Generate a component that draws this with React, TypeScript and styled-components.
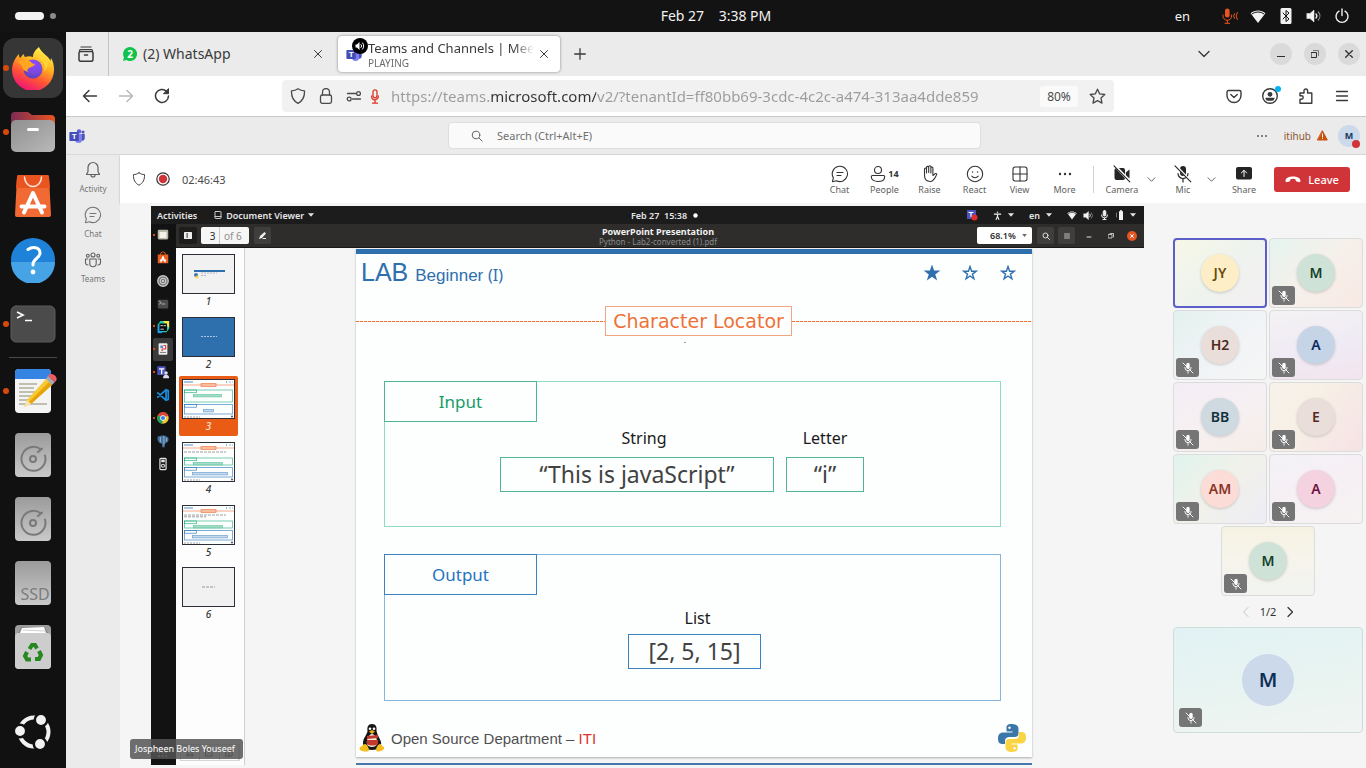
import React from "react";
import styled, { createGlobalStyle, css } from "styled-components";

const UI = `"Noto Sans", "Open Sans", sans-serif`;

const GlobalStyle = createGlobalStyle`
  * { box-sizing: border-box; }
  html, body { margin: 0; padding: 0; }
  body { background: #131313; font-family: ${UI}; }
  button, input, select { font-family: inherit; margin: 0; padding: 0; border: 0; background: none; color: inherit; outline: 0; }
  ul, ol { list-style: none; margin: 0; padding: 0; }
  a { color: inherit; text-decoration: none; }
  svg { display: block; flex: none; }
  h1, h2, p { margin: 0; font-weight: 400; }
`;

/* ---------- shared pieces ---------- */

type IconProps = {
  w?: number;
  h?: number;
  box?: string;
  stroke?: string;
  sw?: number;
  fill?: string;
  children: React.ReactNode;
};

const Icon = ({ w = 16, h, box = "0 0 16 16", stroke = "none", sw = 1, fill = "none", children }: IconProps) => (
  <svg
    width={w}
    height={h ?? w}
    viewBox={box}
    fill={fill}
    stroke={stroke}
    strokeWidth={sw}
    strokeLinecap="round"
    strokeLinejoin="round"
    aria-hidden="true"
  >
    {children}
  </svg>
);

const IconButton = styled.button<{ $w: number; $h?: number }>`
  width: ${(p) => p.$w}px;
  height: ${(p) => p.$h ?? p.$w}px;
  display: flex;
  align-items: center;
  justify-content: center;
  flex: none;
`;

const Grow = styled.span`
  flex: 1;
`;

const Space = styled.span<{ $w: number }>`
  flex: 0 0 ${(p) => p.$w}px;
`;

const TeamsLogo = ({ size }: { size: number }) => (
  <Icon w={size} box="0 0 16 16">
    <circle cx="10" cy="3.4" r="2.2" fill="#5b63d3" />
    <circle cx="14" cy="4" r="1.6" fill="#4f55c4" />
    <path d="M11.5 6h4.2v4.6a2.3 2.3 0 0 1-4.2 1.2z" fill="#4a50bd" />
    <path d="M6 6h7v5.4a3.5 3.5 0 0 1-7 0z" fill="#7b83eb" />
    <rect x="0.4" y="4" width="9.4" height="9" rx="0.8" fill="#444cb8" />
    <text x="5.1" y="11.4" fontSize="8" fontWeight="700" textAnchor="middle" fill="#fff" fontFamily="Liberation Sans, sans-serif">
      T
    </text>
  </Icon>
);

/* ---------- desktop shell ---------- */

const Desktop = styled.div`
  min-height: 100vh;
  display: flex;
  flex-direction: column;
  background: #111;
`;

const TopBar = styled.header`
  height: 32px;
  display: grid;
  grid-template-columns: 1fr auto 1fr;
  align-items: center;
  padding: 0 16px 0 82px;
  background: #131313;
  color: #f2f2f2;
  font-size: 13px;
`;

const Workspaces = styled.div`
  display: flex;
  align-items: center;
  gap: 6px;
  margin-left: -67px;
`;

const Pill = styled.span`
  width: 29px;
  height: 8px;
  border-radius: 4px;
  background: #f2f2f2;
`;

const WorkDot = styled.span`
  width: 6px;
  height: 6px;
  border-radius: 3px;
  background: #8b8b8b;
`;

const Clock = styled.button`
  font-size: 14px;
  line-height: 18px;
  white-space: pre;
`;

const Tray = styled.div`
  display: flex;
  align-items: center;
  justify-content: flex-end;
  gap: 12px;
`;

const Lang = styled.span`
  margin-right: 20px;
`;

const Body = styled.div`
  flex: 1;
  display: flex;
`;

const Dock = styled.nav`
  width: 66px;
  flex: none;
  padding: 4px 0;
  display: flex;
  flex-direction: column;
  background: #111;
`;

const DockItem = styled.button<{ $running?: boolean; $last?: boolean }>`
  position: relative;
  height: 64px;
  display: flex;
  align-items: center;
  justify-content: center;
  ${(p) => p.$last && css`margin-top: auto;`}
  ${(p) =>
    p.$running &&
    css`
      &::before {
        content: "";
        position: absolute;
        left: 3px;
        top: 29px;
        width: 6px;
        height: 6px;
        border-radius: 3px;
        background: #d9480f;
      }
    `}
`;

const ActiveTile = styled.span`
  width: 60px;
  height: 60px;
  border-radius: 12px;
  background: #363636;
  display: flex;
  align-items: center;
  justify-content: center;
`;

const DockRule = styled.hr`
  width: 48px;
  height: 1px;
  border: 0;
  margin: 1px auto;
  background: #4a4a4a;
`;

const FirefoxIcon = () => (
  <Icon w={44} box="0 0 44 44">
    <defs>
      <linearGradient id="fxBody" x1="0.75" y1="0.05" x2="0.3" y2="1">
        <stop offset="0" stopColor="#fff44f" />
        <stop offset="0.35" stopColor="#ffb11f" />
        <stop offset="0.65" stopColor="#ff5634" />
        <stop offset="1" stopColor="#f0107a" />
      </linearGradient>
      <radialGradient id="fxGlobe" cx="0.6" cy="0.2" r="0.9">
        <stop offset="0" stopColor="#8a4bff" />
        <stop offset="0.6" stopColor="#7a48d8" />
        <stop offset="1" stopColor="#4a3fb5" />
      </radialGradient>
    </defs>
    <path d="M28 1c-5 4-6 7-6 10-3-1-5-1-8 0-1-1-1-2-1-3-2 1-3 3-3.5 4C8 11 8 10 8 8 4 12 1 18 1 24a21 21 0 0 0 42 0c0-5-1-9-3-12l-.5 3C38 10 30 7 28 1z" fill="url(#fxBody)" />
    <circle cx="22" cy="23" r="9.5" fill="url(#fxGlobe)" />
    <path d="M7 16c4-3 10-3 13 0 1 1 2 2 4 2-1 3-5 3-6 4-2 1-2 3-1 4-4-1-6-3-6-6z" fill="#ffa51f" />
    <path d="M27 12c6 2 8 8 6 13 3-2 5-7 3-11-1-3-5-5-8-7z" fill="#ffd53a" opacity="0.85" />
  </Icon>
);

const FilesIcon = () => (
  <Icon w={46} h={42} box="0 0 46 42">
    <defs>
      <linearGradient id="flTab" x1="0" x2="1">
        <stop offset="0" stopColor="#7c2c56" />
        <stop offset="1" stopColor="#e95420" />
      </linearGradient>
      <linearGradient id="flBody" x1="0" y1="0" x2="1" y2="1">
        <stop offset="0" stopColor="#8f8f8f" />
        <stop offset="1" stopColor="#b9b9b9" />
      </linearGradient>
    </defs>
    <path d="M5 1h13l4 3h19a4 4 0 0 1 4 4v14H1V5a4 4 0 0 1 4-4z" fill="url(#flTab)" />
    <rect x="1" y="9" width="44" height="32" rx="5" fill="url(#flBody)" />
    <rect x="17" y="17" width="12" height="3" rx="1.5" fill="#fff" />
  </Icon>
);

const SoftwareIcon = () => (
  <Icon w={36} h={44} box="0 0 36 44">
    <path d="M4 1h28a2 2 0 0 1 2 2l2 38a2 2 0 0 1-2 2H2a2 2 0 0 1-2-2L2 3a2 2 0 0 1 2-2z" fill="#f26a33" />
    <path d="M4 1h28a2 2 0 0 1 2 2l1 11H1L2 3a2 2 0 0 1 2-2z" fill="#e95420" />
    <path d="M9.5 3a8.5 9.5 0 0 0 17 0" stroke="#fbe3d9" strokeWidth="1.5" />
    <path d="M9 38.500 18 19l9 19.500M6.500 32.500h23" stroke="#fff" strokeWidth="4" />
  </Icon>
);

const HelpIcon = () => (
  <Icon w={46} box="0 0 46 46">
    <circle cx="23" cy="23" r="22" fill="#1d82d8" />
    <path d="M1 25a22 22 0 0 0 44 0z" fill="#46a4e6" />
    <path d="M18 12.500c4-3 12-3 12 3.500 0 5-7 6-7 11v1" stroke="#fff" strokeWidth="3" />
    <circle cx="23" cy="35" r="2.4" fill="#fff" />
  </Icon>
);

const TerminalIcon = () => (
  <Icon w={46} h={38} box="0 0 46 38">
    <rect x="1" y="1" width="44" height="36" rx="5" fill="#4b4b4b" stroke="#5c5c5c" />
    <path d="m7 7 6 3-6 3M15 15.500h7" stroke="#fff" strokeWidth="1.7" strokeLinecap="butt" strokeLinejoin="miter" />
  </Icon>
);

const EditorIcon = () => (
  <Icon w={50} h={46} box="0 0 50 46">
    <rect x="7" y="1" width="36" height="44" rx="4" fill="#f4f4f4" />
    <path d="M7 11V5a4 4 0 0 1 4-4h28a4 4 0 0 1 4 4v6z" fill="#3584e4" />
    <path d="M11 16h18M11 20h15M11 24h16M11 28h13M11 32h9M11 36h28" stroke="#c0bfb0" strokeWidth="2" strokeLinecap="butt" />
    <path d="m19 32 19-21 6 6-21 19-7 3z" fill="#f9c930" />
    <path d="m41 14 3 3-21 19-2-2z" fill="#e5a50a" />
    <path d="m19 32 4 4-7 3z" fill="#f6e0b8" />
    <path d="m38 11 2-3 7 6-3 3z" fill="#a8a8a8" />
    <path d="M40 8c3-5 11 1 8 5l-1 1-7-6z" fill="#ed5b64" />
  </Icon>
);

const DiskBody = ({ id, children }: { id: string; children: React.ReactNode }) => (
  <Icon w={38} h={46} box="0 0 38 46">
    <defs>
      <linearGradient id={id} x1="0" y1="0" x2="0" y2="1">
        <stop offset="0" stopColor="#9b9b9b" />
        <stop offset="1" stopColor="#c9c9c9" />
      </linearGradient>
    </defs>
    <rect x="1" y="1" width="36" height="44" rx="4" fill={`url(#${id})`} />
    {children}
  </Icon>
);

const HddIcon = ({ id }: { id: string }) => (
  <DiskBody id={id}>
    <path d="M27 17.500a12 12 0 1 0 4 6" stroke="#797979" strokeWidth="2" />
    <path d="m24 20 4-3.500" stroke="#797979" strokeWidth="2" />
    <circle cx="19" cy="27" r="3" stroke="#797979" strokeWidth="2" />
  </DiskBody>
);

const TrashIcon = () => (
  <DiskBody id="trashBody">
    <rect x="1" y="9" width="36" height="36" rx="4" fill="#cdcdcd" />
    <path d="M4 9 7 3h24l3 6z" fill="#8a8a8a" />
    <path d="m6 9 2-5 22-1 2 6z" fill="#fff" />
    <path d="m9 6 22 1" stroke="#bbb" strokeWidth="0.7" />
    <g stroke="#26881f" strokeWidth="4" strokeLinecap="butt" strokeLinejoin="miter">
      <path d="m15.500 25 2.500-4h3l2 3.500" />
      <path d="m25 27 2 4-2 4h-4" />
      <path d="M17 35.500h-4L11 32l2-4" />
    </g>
  </DiskBody>
);

const UbuntuLogo = () => (
  <Icon w={38} box="0 0 38 38">
    <circle cx="20" cy="19" r="14.500" stroke="#f2f2f2" strokeWidth="4" />
    <g fill="#f2f2f2" stroke="#111" strokeWidth="2.5">
      <circle cx="6" cy="18" r="6.2" />
      <circle cx="27" cy="7" r="6.2" />
      <circle cx="26" cy="31" r="6.2" />
    </g>
  </Icon>
);

/* ---------- browser ---------- */

const Browser = styled.section`
  flex: 1;
  min-width: 0;
  display: flex;
  flex-direction: column;
  background: #f5f5f5;
`;

const TabStrip = styled.div`
  height: 44px;
  display: flex;
  align-items: center;
  padding-right: 6px;
  background: #ebebeb;
  color: #3a3a3a;
`;

const TabListButton = styled.button`
  width: 43px;
  height: 44px;
  padding-right: 2px;
  display: flex;
  align-items: center;
  justify-content: center;
  border-right: 1px solid #c4c4c4;
`;

const Tab = styled.div<{ $active?: boolean }>`
  width: 222px;
  height: 36px;
  margin-left: ${(p) => (p.$active ? 0 : 7)}px;
  padding: 0 8px;
  display: flex;
  align-items: center;
  border-radius: 4px;
  ${(p) =>
    p.$active
      ? css`
          background: #fff;
          box-shadow: 0 0 3px rgba(0, 0, 0, 0.45);
        `
      : css`
          padding: 0 12px 0 7px;
        `}
`;

const TabLink = styled.a`
  flex: 1;
  min-width: 0;
  display: flex;
  align-items: center;
  gap: 6px;
  font-size: 14px;
  line-height: 18px;
`;

const TabText = styled.span<{ $faded?: boolean }>`
  white-space: nowrap;
  ${(p) =>
    p.$faded &&
    css`
      font-size: 13px;
      line-height: 17px;
      mask-image: linear-gradient(to right, #000 88%, transparent);
    `}
`;

const TabState = styled.small`
  display: block;
  font-size: 10px;
  line-height: 12px;
  color: #6b6b6b;
`;

const TabIconStack = styled.span`
  position: relative;
  display: flex;
`;

const SoundBadge = styled.span`
  position: absolute;
  left: 6px;
  top: -8px;
`;

const WindowButton = styled(IconButton)`
  margin-left: 12px;
  border-radius: 11px;
  background: #dadada;
`;

const NavBar = styled.div`
  height: 41px;
  display: flex;
  align-items: center;
  padding: 0 6px;
  background: #fff;
  border-bottom: 1px solid #c8c8c8;
`;

const UrlBox = styled.div`
  flex: 1;
  min-width: 0;
  height: 32px;
  margin: 0 102px;
  padding: 0 1px 0 8px;
  display: flex;
  align-items: center;
  border-radius: 4px;
  background: #f1f1f1;
`;

const UrlIcons = styled.div`
  display: flex;
  align-items: center;
  gap: 12px;
  margin-right: 9px;
`;

const UrlMic = styled.span`
  display: flex;
  margin-right: 12px;
`;

const UrlInput = styled.input`
  flex: 1;
  min-width: 0;
  height: 30px;
  font-size: 15px;
  color: transparent;
  background: linear-gradient(to right, #9b9b9b 98px, #333 98px, #333 205px, #9b9b9b 205px);
  background-clip: text;
  -webkit-background-clip: text;
`;

const ZoomChip = styled.button`
  height: 21px;
  width: 38px;
  margin-right: 3px;
  border-radius: 3px;
  background: #fafafa;
  color: #4a4a4a;
  font-size: 12px;
`;

const TeamsHeader = styled.div`
  height: 38px;
  display: flex;
  align-items: center;
  padding: 0 6px 0 3px;
  background: #ebebeb;
  border-bottom: 1px solid #d9d9d9;
`;

const HeaderSide = styled.div<{ $end?: boolean }>`
  flex: 1;
  display: flex;
  align-items: center;
  justify-content: ${(p) => (p.$end ? "flex-end" : "flex-start")};
  gap: 10px;
`;

const SearchField = styled.label`
  flex: 0 1 533px;
  height: 27px;
  padding: 0 22px;
  display: flex;
  align-items: center;
  gap: 14px;
  background: #fafafa;
  border: 1px solid #dedede;
  border-radius: 4px;
  input {
    flex: 1;
    min-width: 0;
    font-size: 11px;
  }
  input::placeholder {
    color: #707070;
    opacity: 1;
  }
`;

const Tenant = styled.button`
  font-size: 10px;
  color: #8e562f;
  display: flex;
  align-items: center;
  gap: 6px;
`;

const MeAvatar = styled.button`
  position: relative;
  width: 22px;
  height: 22px;
  border-radius: 11px;
  background: #ccd9ea;
  color: #17375e;
  font-size: 9px;
  font-weight: 700;
  &::after {
    content: "";
    position: absolute;
    right: 0;
    bottom: -1px;
    width: 8px;
    height: 8px;
    border-radius: 4px;
    background: #d13438;
  }
`;

const TeamsBody = styled.div`
  flex: 1;
  display: flex;
`;

const Rail = styled.nav`
  width: 54px;
  flex: none;
  padding-top: 5px;
  display: flex;
  flex-direction: column;
  gap: 10px;
  background: #ebebeb;
`;

const RailItem = styled.button`
  height: 35px;
  display: flex;
  flex-direction: column;
  align-items: center;
  gap: 3px;
  color: #757575;
  font-size: 8px;
  line-height: 12px;
  svg {
    margin: 1px 0;
  }
`;

const Meeting = styled.main`
  flex: 1;
  min-width: 0;
  display: flex;
  flex-direction: column;
`;

const CallBar = styled.div`
  height: 48px;
  display: flex;
  align-items: center;
  padding: 0 16px 0 12px;
  background: #fff;
  box-shadow: 0 1px 2px rgba(0, 0, 0, 0.25);
  color: #242424;
`;

const Timer = styled.time`
  margin-left: 12px;
  font-size: 11px;
  color: #4a4a4a;
`;

const CallButton = styled.button<{ $w?: number }>`
  width: ${(p) => p.$w ?? 45}px;
  padding-top: 3px;
  display: flex;
  flex-direction: column;
  align-items: center;
  font-size: 9px;
  line-height: 14px;
  color: #616161;
`;

const IconLine = styled.span`
  display: flex;
  align-items: center;
  gap: 2px;
  height: 18px;
  color: #333;
  font-weight: 700;
`;

const CallRule = styled.span`
  width: 1px;
  height: 27px;
  margin: 0 7px 0 6px;
  background: #d1d1d1;
`;

const LeaveButton = styled.button`
  height: 25px;
  width: 76px;
  margin-left: 8px;
  display: flex;
  align-items: center;
  justify-content: center;
  gap: 7px;
  border-radius: 3px;
  background: #d13438;
  color: #fff;
  font-size: 11px;
  font-weight: 500;
`;

const Stage = styled.div`
  position: relative;
  flex: 1;
  display: flex;
  padding: 3px 3px 3px 31px;
  gap: 29px;
  background: #f5f5f5;
`;

const NameTag = styled.span`
  position: absolute;
  left: 10px;
  bottom: 9px;
  height: 20px;
  padding: 0 8px 0 5px;
  border-radius: 3px;
  background: rgba(85, 85, 85, 0.85);
  color: #fff;
  font-size: 9px;
  line-height: 20px;
`;

/* ---------- shared screen ---------- */

const Shared = styled.section`
  flex: 1;
  min-width: 0;
  display: flex;
  flex-direction: column;
  background: #f5f5f5;
`;

const SharedTop = styled.div`
  height: 18px;
  display: grid;
  grid-template-columns: 1fr auto 1fr;
  align-items: center;
  padding: 0 8px 0 6px;
  background: #1c1c1c;
  color: #e6e6e6;
  font-size: 9px;
  font-weight: 600;
`;

const SharedGroup = styled.div<{ $gap: number; $end?: boolean }>`
  display: flex;
  align-items: center;
  gap: ${(p) => p.$gap}px;
  justify-content: ${(p) => (p.$end ? "flex-end" : "flex-start")};
`;

const SharedClock = styled.div`
  display: flex;
  align-items: center;
  gap: 6px;
  padding-left: 36px;
`;

const AppMenu = styled.span`
  display: flex;
  align-items: center;
  gap: 4px;
`;

const SharedBody = styled.div`
  flex: 1;
  display: flex;
`;

const SharedDock = styled.div`
  width: 25px;
  flex: none;
  display: flex;
  flex-direction: column;
  justify-content: space-between;
  align-items: stretch;
  background: #121212;
`;

const SharedApps = styled.ul`
  height: 251px;
  display: flex;
  flex-direction: column;
`;

const SharedApp = styled.li<{ $on?: boolean; $dot?: boolean }>`
  position: relative;
  flex: 1;
  margin-left: 2px;
  margin-right: 3px;
  display: flex;
  align-items: center;
  justify-content: center;
  border-radius: 2px;
  background: ${(p) => (p.$on ? "#3a3a3a" : "none")};
  ${(p) =>
    p.$dot &&
    css`
      &::before {
        content: "";
        position: absolute;
        left: 0;
        top: 10px;
        width: 2px;
        height: 2px;
        background: #d9480f;
      }
    `}
`;

const Viewer = styled.div`
  flex: 1;
  min-width: 0;
  display: flex;
  flex-direction: column;
`;

const ViewerBar = styled.div`
  height: 24px;
  display: grid;
  grid-template-columns: 1fr auto 1fr;
  align-items: center;
  padding: 0 7px 0 3px;
  background: #2e2d2c;
  border-bottom: 1px solid #191919;
  color: #f2f2f2;
`;

const ViewerTitle = styled.h1`
  text-align: center;
  font-size: 9px;
  line-height: 11px;
  font-weight: 700;
  small {
    display: block;
    font-size: 8px;
    line-height: 9px;
    font-weight: 400;
    color: #8a8a8a;
  }
`;

const BarButton = styled(IconButton)<{ $dark?: boolean }>`
  border-radius: 2px;
  background: ${(p) => (p.$dark ? "#1d1d1d" : "#3f3e3d")};
`;

const PageBox = styled.label`
  width: 48px;
  height: 17px;
  margin: 0 5px 0 4px;
  display: flex;
  align-items: center;
  border-radius: 2px;
  background: #f6f6f6;
  color: #8e8e8e;
  font-size: 10px;
  input {
    width: 19px;
    height: 17px;
    margin-right: 4px;
    padding-left: 5px;
    text-align: center;
    border-right: 1px solid #c8c8c8;
    color: #2a2a2a;
    font-size: 10px;
  }
`;

const ZoomSelect = styled.span`
  width: 55px;
  height: 17px;
  margin-right: 1px;
  padding-right: 5px;
  display: flex;
  align-items: center;
  border-radius: 2px;
  background: #fff;
  color: #2e2e2e;
  select {
    flex: 1;
    min-width: 0;
    padding-left: 13px;
    appearance: none;
    font-size: 9px;
    font-weight: 600;
  }
`;

const CloseDot = styled(IconButton)`
  border-radius: 5px;
  background: #e95420;
  margin-left: 4px;
`;

const ViewerBody = styled.div`
  flex: 1;
  display: flex;
`;

const Sidebar = styled.aside`
  width: 69px;
  flex: none;
  display: flex;
  flex-direction: column;
  justify-content: space-between;
  padding-top: 3px;
  background: #fdfdfd;
  border-right: 1px solid #cfcfcf;
`;

const ThumbList = styled.ol`
  height: 376px;
  display: flex;
  flex-direction: column;
`;

const ThumbItem = styled.li`
  flex: 1;
  display: flex;
  justify-content: flex-start;
  padding-left: 3px;
`;

const Thumb = styled.button<{ $on?: boolean }>`
  width: 59px;
  height: 60px;
  padding-top: 3px;
  display: flex;
  flex-direction: column;
  align-items: center;
  border-radius: 2px;
  background: ${(p) => (p.$on ? "#ea5b15" : "none")};
  color: ${(p) => (p.$on ? "#fbe0d0" : "#3a3a3a")};
  font-size: 10px;
  line-height: 14px;
  font-weight: 500;
  font-style: italic;
`;

const SideTabs = styled.div`
  display: flex;
  margin: 0 4px 4px 4px;
  height: 17px;
  border: 1px solid #d5d5d5;
  span {
    flex: 1;
    display: flex;
    align-items: center;
    justify-content: center;
    border-right: 1px solid #d5d5d5;
  }
`;

const Pages = styled.div`
  flex: 1;
  min-width: 0;
  display: flex;
  flex-direction: column;
  align-items: center;
  justify-content: space-between;
  padding: 1px 1px 0 0;
  background: #f5f5f5;
`;

/* ---------- slide ---------- */

const BLUE = "#2e70ad";
const ORANGE = "#ee7238";

const Slide = styled.article`
  width: 100%;
  max-width: 676px;
  display: flex;
  flex-direction: column;
  background: #fdfefe;
  border-top: 5px solid ${BLUE};
  box-shadow: 0 1px 2px rgba(0, 0, 0, 0.3);
`;

const SlideHead = styled.div`
  height: 52px;
  padding: 2px 16px 0 5px;
  display: flex;
  justify-content: space-between;
  align-items: flex-start;
  color: ${BLUE};
`;

const LabTitle = styled.h1`
  font-family: "Liberation Sans", Arial, sans-serif;
  font-size: 25px;
  line-height: 32px;
  color: ${BLUE};
  small {
    font-size: 17px;
  }
  span {
    font-family: ${UI};
    font-size: 16px;
  }
`;

const Stars = styled.div`
  display: flex;
  gap: 22px;
  padding-top: 9px;
`;

const TitleRow = styled.div`
  display: flex;
  align-items: center;
`;

const DashedRule = styled.span<{ $grow: number }>`
  flex: ${(p) => p.$grow} 1 0;
  height: 1px;
  background: repeating-linear-gradient(to right, ${ORANGE} 0 3px, #fbd9c8 3px 4px);
`;

const TitleBox = styled.h2`
  height: 30px;
  padding: 0 7px;
  border: 1px solid #f2a583;
  font-family: "DejaVu Sans", Verdana, sans-serif;
  font-size: 19px;
  line-height: 28px;
  color: ${ORANGE};
`;

const Speck = styled.span`
  width: 2px;
  height: 1px;
  margin: 6px 0 38px 328px;
  background: #9a9a9a;
`;

type Tone = { panel: string; edge: string; ink: string };
const green: Tone = { panel: "#8fdcc2", edge: "#4fb592", ink: "#189c68" };
const blue: Tone = { panel: "#86b6e0", edge: "#3c80bd", ink: "#1f74c0" };

const Panel = styled.section<{ $tone: Tone; $h: number }>`
  min-height: ${(p) => p.$h}px;
  margin: 0 31px 27px 28px;
  display: flex;
  flex-direction: column;
  align-items: flex-start;
  border: 1px solid ${(p) => p.$tone.panel};
`;

const PanelLabel = styled.h2<{ $tone: Tone }>`
  width: 153px;
  height: 41px;
  margin: -1px 0 0 -1px;
  border: 1px solid ${(p) => p.$tone.edge};
  color: ${(p) => p.$tone.ink};
  font-size: 17px;
  line-height: 39px;
  text-align: center;
`;

const Fields = styled.div<{ $center?: boolean }>`
  display: flex;
  gap: 12px;
  ${(p) =>
    p.$center
      ? css`
          align-self: center;
          padding: 13px 0 0 4px;
        `
      : css`
          padding: 6px 0 0 115px;
        `}
`;

const Field = styled.div<{ $w: number; $gap: number; $indent?: number }>`
  width: ${(p) => p.$w}px;
  text-align: center;
  h3 {
    margin: 0 0 ${(p) => p.$gap}px;
    padding-left: ${(p) => p.$indent ?? 0}px;
    font-size: 16px;
    line-height: 21px;
    font-weight: 400;
    color: #1a1a1a;
  }
`;

const FieldValue = styled.p<{ $tone: Tone }>`
  height: 35px;
  border: 1px solid ${(p) => p.$tone.edge};
  font-size: 23px;
  line-height: 32px;
  color: #424242;
`;

const SlideFoot = styled.div`
  height: 56px;
  margin-top: -27px;
  padding: 22px 6px 4px 3px;
  display: flex;
  align-items: center;
  font-family: "Liberation Sans", Arial, sans-serif;
  font-size: 15px;
  color: #505050;
  p {
    flex: 1;
    margin-left: 6px;
  }
  b {
    font-weight: 400;
    color: #d9352c;
  }
`;

const NextSlide = styled.div`
  width: 100%;
  max-width: 676px;
  height: 2px;
  background: #4579ac;
`;

const Star = ({ filled }: { filled?: boolean }) => (
  <Icon w={16} stroke={BLUE} sw={1.4} fill={filled ? BLUE : "none"}>
    <path
      strokeLinejoin="miter"
      d="M8 1.600 9.600 6.200h4.700l-3.800 2.900 1.400 4.700L8 11l-3.900 2.800 1.400-4.700L1.700 6.200h4.700z"
    />
  </Icon>
);

const Tux = () => (
  <Icon w={26} h={30} box="0 0 26 30">
    <path d="M13 1c-4 0-5 3-4.500 7C8 12 4 15 4 20c0 4 3 7 9 7s10-3 9-8c-1-4-4-7-4.500-11C18 4 17 1 13 1z" fill="#161616" />
    <path d="M13 11c-3 0-6 6-5 10 1 4 9 4 10 0 1-4-2-10-5-10z" fill="#f4efe6" />
    <circle cx="11" cy="5.800" r="1.300" fill="#fff" />
    <circle cx="15" cy="5.800" r="1.300" fill="#fff" />
    <path d="m10 8.500 3-1.500 3 1.500-3 2.500z" fill="#f3b21b" />
    <path d="m8 13 11-1v3L8 16zM8 17h11v4c-3 2-8 2-11 0z" fill="#c0392b" />
    <path d="M1 24c2 0 3-3 5-3s4 4 4 6c0 3-8 1-9 0-1-1 0-2 0-3zM25 24c-2 0-2-3-4-3s-4 4-4 6c1 3 6 1 8-1z" fill="#f5bd1f" />
  </Icon>
);

const PythonLogo = ({ size }: { size: number }) => (
  <Icon w={size} box="0 0 28 28">
    <path d="M14 0C8 0 8.500 2.500 8.500 5v2.500h6v1H5.500C2.500 8.500 0 10 0 14.500S2 20 5 20h2v-3c0-3 2-4 4.500-4H17c2 0 3.500-1.500 3.500-3.500V5C20.500 1.500 18 0 14 0z" fill="#3b76a8" />
    <path d="M14 28c6 0 5.500-2.500 5.500-5v-2.500h-6v-1h9c3 0 5.500-1.500 5.500-6S26 8 23 8h-2v3c0 3-2 4-4.500 4H11c-2 0-3.500 1.500-3.500 3.500V23c0 3.500 2.500 5 6.500 5z" fill="#fbd343" />
    <circle cx="11.500" cy="3.800" r="1.200" fill="#fff" />
    <circle cx="16.500" cy="24.200" r="1.200" fill="#fff" />
  </Icon>
);

/* ---------- thumbnails ---------- */

const ThumbFrame = ({ fill, children }: { fill: string; children?: React.ReactNode }) => (
  <svg width="53" height="40" viewBox="0 0 53 40" fill="none" aria-hidden="true">
    <rect x="0.5" y="0.5" width="52" height="39" fill={fill} stroke="#2b2f38" />
    {children}
  </svg>
);

const ExerciseThumb = ({ lines, top, boxW }: { lines: number; top: number; boxW: number }) => (
  <ThumbFrame fill="#fdfefe">
    <path d="M2 3h9" stroke={BLUE} strokeWidth="0.800" />
    <path d="M44 3h1M47.500 3h1M50.500 3h.5" stroke={BLUE} strokeWidth="1" />
    <path d="M1 6h51" stroke="#f0875a" strokeWidth="0.700" />
    <rect x="19" y="4.700" width="15" height="2.600" fill="#f8c1a7" stroke={ORANGE} strokeWidth="0.700" />
    {lines > 0 && <path d="M2 10h42" stroke="#777" strokeWidth="0.700" strokeDasharray="3 1" />}
    {lines > 1 && <path d="M2 11.800h22" stroke="#777" strokeWidth="0.700" strokeDasharray="3 1" />}
    <rect x="2.500" y={top} width="48" height={23 - top} stroke="#55c39d" strokeWidth="0.800" />
    <rect x="2.500" y={top} width="12" height="2.700" stroke="#2fb183" strokeWidth="0.700" />
    <rect x="11.500" y={top + 4.500} width={boxW} height="2.400" fill="#a6dcc6" stroke="#55c39d" strokeWidth="0.600" />
    <rect x="2.500" y="25.500" width="48" height="9.500" stroke="#5b97cd" strokeWidth="0.800" />
    <rect x="2.500" y="25.500" width="12" height="2.700" stroke="#3c80bd" strokeWidth="0.700" />
    <rect x={lines ? 10.5 : 21.5} y="30.500" width={lines ? 35 : 10} height="2.400" fill="#c6daee" stroke="#5b97cd" strokeWidth="0.600" />
    <path d="M2 38h16" stroke="#888" strokeWidth="0.800" strokeDasharray="2 1" />
    <circle cx="50" cy="37.500" r="1" fill="#456" />
  </ThumbFrame>
);

const thumbs: React.ReactNode[] = [
  <ThumbFrame fill="#f1f1f1">
    <path d="M12 17h31" stroke={BLUE} strokeWidth="2" />
    <path d="M19 19h16M19 21.500h6" stroke="#9ab" strokeWidth="0.800" strokeDasharray="2 1" />
    <circle cx="14" cy="21" r="2" fill="#3b76a8" />
    <circle cx="15" cy="23" r="1.500" fill="#fbd343" />
  </ThumbFrame>,
  <ThumbFrame fill={BLUE}>
    <path d="M19 19.500h16" stroke="#a9c7e2" strokeWidth="1" strokeDasharray="2 1" />
  </ThumbFrame>,
  <ExerciseThumb lines={0} top={11} boxW={28} />,
  <ExerciseThumb lines={1} top={16} boxW={29} />,
  <ExerciseThumb lines={2} top={16} boxW={29} />,
  <ThumbFrame fill="#f1f1f1">
    <path d="M20 20h13" stroke="#999" strokeWidth="1" strokeDasharray="3 1" />
  </ThumbFrame>,
];

/* ---------- shared desktop apps ---------- */

const sharedApps: { name: string; on?: boolean; dot?: boolean; art: React.ReactNode }[] = [
  { name: "Files", dot: true, art: <><rect x="2" y="2" width="12" height="11" rx="1.500" fill="#b9b6a6" /><rect x="4" y="4.500" width="8" height="7" fill="#f4f2e8" /></> },
  { name: "Software", art: <><path d="M2 4h12v10H2z" fill="#ea5f22" /><path d="M5 4a3 3 0 0 1 6 0" stroke="#ea5f22" /><path d="m5.500 12.500 2.500-6 2.500 6M5 10.500h6" stroke="#fff" strokeWidth="1.400" /></> },
  { name: "Settings", art: <><circle cx="8" cy="8" r="6" fill="#777" stroke="#c9c9c9" strokeWidth="1.500" /><circle cx="8" cy="8" r="3.200" stroke="#d0d0d0" strokeWidth="1.200" /><circle cx="8" cy="8" r="1.200" fill="#ddd" /></> },
  { name: "Terminal", art: <><rect x="2" y="3" width="12" height="10" rx="1" fill="#4c4c4c" /><path d="m4 5 2 1.500L4 8M7 8h3" stroke="#ddd" strokeWidth="0.800" /></> },
  { name: "PyCharm", dot: true, art: <><path d="M5 1h10v9l-3 4H2V5z" fill="#21c9a6" /><path d="M8 1h7v8l-4-4z" fill="#f5e84a" /><path d="M2 6h5v9H2z" fill="#1ea0ee" /><rect x="4" y="4" width="8.500" height="8.500" fill="#0b0b0b" /><path d="M5.500 6.500h2M9 6.500h2M5.500 10.500h3" stroke="#fff" strokeWidth="0.900" /></> },
  { name: "Document Viewer", on: true, dot: true, art: <><rect x="3" y="1.500" width="10" height="13" rx="1" fill="#eee" /><path d="M5 4h3v3H5z" fill="#5b86c7" /><path d="M9 4h2v4H7v2" stroke="#d7402f" strokeWidth="1.300" /><path d="M5 12h6" stroke="#777" /></> },
  { name: "Teams", dot: true, art: <><rect x="1.500" y="1.500" width="9.500" height="10" rx="1" fill="#4b53bc" /><path d="M4 4.500h5M6.500 4.500V10" stroke="#fff" strokeWidth="1.400" /><circle cx="11.500" cy="9" r="2" fill="#dcdcf0" /><path d="M8 15c0-3 1.500-4 3.500-4s3.500 1 3.500 4z" fill="#dcdcf0" /></> },
  { name: "VS Code", art: <path d="m11.500 2 2.500 1v10l-2.500 1L2 5.500M11.500 2 2 10.500M11.500 3v10" stroke="#1b8ad6" strokeWidth="2" /> },
  { name: "Chrome", dot: true, art: <><circle cx="8" cy="8" r="6.500" fill="#f0c330" /><path d="M8 8 2 5a6.500 6.500 0 0 1 12 0z" fill="#dc4437" /><path d="M8 8 2 5a6.500 6.500 0 0 0 5 9.500z" fill="#1fa05a" /><circle cx="8" cy="8" r="3.200" fill="#fff" /><circle cx="8" cy="8" r="2.400" fill="#3a7de8" /></> },
  { name: "pgAdmin", art: <><path d="M2 3c4-2 9-2 12 1 1 3 0 5-2 6l-2 1v4H7v-4C3 11 1 6 2 3z" fill="#44709c" /><path d="M5 4v5M9 3v9M12 5v3" stroke="#b9cde0" strokeWidth="0.800" /></> },
  { name: "Device", art: <><rect x="4.500" y="1.500" width="7" height="13" rx="1" stroke="#e2e2e2" strokeWidth="1.400" /><rect x="6" y="3" width="4" height="3" fill="#e2e2e2" /><circle cx="8" cy="10" r="1.700" stroke="#e2e2e2" strokeWidth="1.200" /></> },
];

/* ---------- gallery ---------- */

const Gallery = styled.aside`
  width: 190px;
  flex: none;
  padding-top: 32px;
`;

const TileGrid = styled.ul`
  display: flex;
  flex-wrap: wrap;
  justify-content: center;
  gap: 2px;
`;

const Tile = styled.li<{ $bg: string; $speaking?: boolean }>`
  position: relative;
  width: 94px;
  height: 70px;
  display: flex;
  align-items: center;
  justify-content: center;
  border: ${(p) => (p.$speaking ? "2px solid #5b5fc7" : "1px solid #dcdcdc")};
  border-radius: 4px;
  background: ${(p) => p.$bg};
`;

const SelfTile = styled.div`
  position: relative;
  height: 106px;
  display: flex;
  align-items: center;
  justify-content: center;
  border: 1px solid #cfdcdc;
  border-radius: 4px;
  background: linear-gradient(170deg, #e2f2f4, #e9f4f1 60%, #f1f4f2);
`;

const Avatar = styled.span<{ $bg: string; $fg: string; $big?: boolean }>`
  width: ${(p) => (p.$big ? 52 : 38)}px;
  height: ${(p) => (p.$big ? 52 : 38)}px;
  border-radius: 50%;
  display: flex;
  align-items: center;
  justify-content: center;
  background: ${(p) => p.$bg};
  color: ${(p) => p.$fg};
  font-size: ${(p) => (p.$big ? 20 : 14)}px;
  line-height: ${(p) => (p.$big ? 26 : 18)}px;
  font-weight: 600;
  box-shadow: ${(p) => (p.$big ? "none" : "0 1px 3px rgba(0,0,0,0.18)")};
`;

const MutedChip = styled.span<{ $inset: number }>`
  position: absolute;
  left: ${(p) => p.$inset}px;
  bottom: ${(p) => p.$inset}px;
  width: 23px;
  height: 19px;
  border-radius: 3px;
  background: #757575;
  display: flex;
  align-items: center;
  justify-content: center;
`;

const Pager = styled.div`
  height: 31px;
  display: flex;
  align-items: center;
  justify-content: center;
  gap: 7px;
  font-size: 11px;
  color: #333;
`;

const Muted = ({ inset }: { inset: number }) => (
  <MutedChip $inset={inset} aria-label="Muted">
    <Icon w={12} box="0 0 12 12">
      <rect x="4.300" y="0.800" width="3.400" height="6.200" rx="1.700" fill="#fff" />
      <path d="M2.800 5.500a3.200 3.200 0 0 0 6.400 0M6 8.700v2.500" stroke="#fff" strokeWidth="0.900" />
      <path d="m1 1 10 10" stroke="#fff" strokeWidth="0.900" />
    </Icon>
  </MutedChip>
);

const people = [
  { id: "JY", bg: "#fdeec8", fg: "#6b4a08", tile: "linear-gradient(135deg,#f6f7e6,#eef3ee 50%,#f3eff2)", speaking: true },
  { id: "M", bg: "#cfe2d8", fg: "#143f28", tile: "linear-gradient(135deg,#e5f4f0,#f6f0ea 50%,#f8e9e4)" },
  { id: "H2", bg: "#eadeda", fg: "#4e2a20", tile: "linear-gradient(135deg,#e3f2ee,#f0f3f6 50%,#f6f6f6)" },
  { id: "A", bg: "#c6d4e8", fg: "#0c2a5c", tile: "linear-gradient(170deg,#f4f2f4,#efeaf4 60%,#f3e4ee)" },
  { id: "BB", bg: "#cedae0", fg: "#12303a", tile: "linear-gradient(160deg,#f4edf6,#f6f0f2 50%,#f6ede8)" },
  { id: "E", bg: "#e9deda", fg: "#54291f", tile: "linear-gradient(125deg,#f6f2ea,#f7f0e6 40%,#f6e2e4)" },
  { id: "AM", bg: "#fbdcd6", fg: "#8a3226", tile: "linear-gradient(135deg,#e0f4ee,#f1f1ea 50%,#eeecf6)" },
  { id: "A", bg: "#f4d2e0", fg: "#6e1140", tile: "linear-gradient(160deg,#f3f2f6,#f6eff4 50%,#f5f3f1)" },
  { id: "M", bg: "#cfe2d8", fg: "#143f28", tile: "linear-gradient(180deg,#f6f2e2,#f6f4ec 50%,#f0f3ef)" },
];

/* ---------- Teams icons ---------- */

const ChatGlyph = ({ size = 18 }: { size?: number }) => (
  <Icon w={size} box="0 0 18 18" stroke="currentColor" sw={1.1}>
    <path d="M9 1.200A7.700 7.700 0 1 1 5.400 15.800L1.400 16.700l1-3.800A7.700 7.700 0 0 1 9 1.200z" />
    <path d="M6 7.500h6M6 10.500h4" />
  </Icon>
);

const Chevron = () => (
  <Icon w={9} box="0 0 9 9" stroke="#5a5a5a" sw={0.9}>
    <path d="m1 2.700 3.500 3.600L8 2.700" />
  </Icon>
);

const Caret = ({ color = "#e6e6e6" }: { color?: string }) => (
  <Icon w={6} h={4} box="0 0 6 4" fill={color}>
    <path d="M0 0.300h6L3 3.800z" />
  </Icon>
);

const WifiGlyph = ({ size }: { size: number }) => (
  <Icon w={size} fill="#f2f2f2">
    <path d="M8 15 .6 5.200C5 1.600 11 1.600 15.400 5.200z" />
    <path d="M2.200 5.800a9.500 9.500 0 0 1 11.600 0" stroke="#131313" strokeWidth="1" fill="none" />
  </Icon>
);

const SpeakerGlyph = ({ size }: { size: number }) => (
  <Icon w={size} stroke="#f2f2f2">
    <path d="M1 5.500h3L8 2v12l-4-3.500H1z" fill="#f2f2f2" strokeWidth="0.500" />
    <path d="M10 6a3 3 0 0 1 0 4" strokeWidth="1.300" />
    <path d="M12.300 4a6 6 0 0 1 0 8" stroke="#8a8a8a" strokeWidth="1.200" />
  </Icon>
);

/* ---------- page ---------- */

const Slides = () => (
  <Pages>
    <Slide>
      <SlideHead>
        <LabTitle>
          LAB <small>Beginner <span>(I)</span></small>
        </LabTitle>
        <Stars>
          <Star filled />
          <Star />
          <Star />
        </Stars>
      </SlideHead>
      <TitleRow>
        <DashedRule $grow={250} />
        <TitleBox>Character Locator</TitleBox>
        <DashedRule $grow={241} />
      </TitleRow>
      <Speck />
      <Panel $tone={green} $h={146}>
        <PanelLabel $tone={green}>Input</PanelLabel>
        <Fields>
          <Field $w={274} $gap={8} $indent={14}>
            <h3>String</h3>
            <FieldValue $tone={green}>“This is javaScript”</FieldValue>
          </Field>
          <Field $w={78} $gap={8}>
            <h3>Letter</h3>
            <FieldValue $tone={green}>“i”</FieldValue>
          </Field>
        </Fields>
      </Panel>
      <Panel $tone={blue} $h={147}>
        <PanelLabel $tone={blue}>Output</PanelLabel>
        <Fields $center>
          <Field $w={133} $gap={5} $indent={6}>
            <h3>List</h3>
            <FieldValue $tone={blue}>[2, 5, 15]</FieldValue>
          </Field>
        </Fields>
      </Panel>
      <SlideFoot>
        <Tux />
        <p>
          Open Source Department – <b>ITI</b>
        </p>
        <PythonLogo size={28} />
      </SlideFoot>
    </Slide>
    <NextSlide />
  </Pages>
);

const SharedScreen = () => (
  <Shared>
    <SharedTop>
      <SharedGroup $gap={17}>
        <span>Activities</span>
        <AppMenu>
          <Icon w={8} box="0 0 8 8" stroke="#c9c9c9">
            <rect x="1" y="0.500" width="6" height="7" rx="0.500" />
            <path d="M1 5.500h6" />
          </Icon>
          Document Viewer
          <Caret />
        </AppMenu>
      </SharedGroup>
      <SharedClock>
        <span>Feb 27&nbsp; 15:38</span>
        <Icon w={5} box="0 0 5 5" fill="#fff"><circle cx="2.500" cy="2.500" r="2.200" /></Icon>
      </SharedClock>
      <SharedGroup $gap={6} $end>
        <Icon w={12} box="0 0 12 12">
          <rect x="1" y="1" width="9" height="9" fill="#4b53bc" />
          <path d="M3 3.500h4M5 3.500v4" stroke="#fff" strokeWidth="1.200" />
          <circle cx="8.500" cy="8.500" r="3" fill="#e12d2d" />
        </Icon>
        <Space $w={3} />
        <Icon w={9} box="0 0 10 10" stroke="#f2f2f2" sw={1.3}>
          <circle cx="5" cy="1.300" r="0.800" fill="#f2f2f2" stroke="none" />
          <path d="M1.500 3.500h7M5 3.500v3M5 6 3.500 9.300M5 6l1.500 3.300" />
        </Icon>
        <Caret />
        <Space $w={3} />
        <span>en</span>
        <Caret />
        <Space $w={3} />
        <WifiGlyph size={10} />
        <SpeakerGlyph size={11} />
        <Icon w={9} h={10} box="0 0 9 10" stroke="#f2f2f2">
          <rect x="3.200" y="0.500" width="2.600" height="5.500" rx="1.300" fill="#f2f2f2" />
          <path d="M1.500 5a3 3 0 0 0 6 0M4.500 8v1.500M3 9.500h3" />
        </Icon>
        <Icon w={9} h={10} box="0 0 9 10" fill="#f2f2f2">
          <path d="M4 1.200h1.200V0h1.600v1.200H8V10H4z" />
          <path d="M1.500 3v4" stroke="#777" />
        </Icon>
        <Caret />
      </SharedGroup>
    </SharedTop>
    <SharedBody>
      <SharedDock>
        <SharedApps>
          {sharedApps.map((a) => (
            <SharedApp key={a.name} $on={a.on} $dot={a.dot} title={a.name}>
              <Icon w={14}>{a.art}</Icon>
            </SharedApp>
          ))}
        </SharedApps>
        <Icon w={25} h={22} box="0 0 25 22" fill="#bdbdbd">
          {[8, 11.5, 15].map((x) => [6, 9.5, 13].map((y) => <circle key={`${x}-${y}`} cx={x} cy={y} r="0.900" />))}
        </Icon>
      </SharedDock>
      <Viewer>
        <ViewerBar>
          <SharedGroup $gap={0}>
            <BarButton $w={18} $h={17} $dark aria-label="Side pane">
              <Icon w={8} h={7} box="0 0 8 7" fill="#eee">
                <rect width="8" height="7" rx="0.500" />
                <rect x="2.600" y="1" width="1" height="5" fill="#333" />
              </Icon>
            </BarButton>
            <PageBox>
              <input defaultValue="3" aria-label="Page" />
              of 6
            </PageBox>
            <BarButton $w={17} $h={17} aria-label="Annotate">
              <Icon w={9} box="0 0 9 9" fill="#eee">
                <path d="m1 8 1-3 4.500-4 1.500 1.500L4 7zM5 7h3v1H4z" />
              </Icon>
            </BarButton>
          </SharedGroup>
          <ViewerTitle>
            PowerPoint Presentation
            <small>Python - Lab2-converted (1).pdf</small>
          </ViewerTitle>
          <SharedGroup $gap={4} $end>
            <ZoomSelect>
              <select aria-label="Zoom" defaultValue="68.1%">
                <option>68.1%</option>
              </select>
              <Icon w={5} h={3} box="0 0 6 4" fill="#666"><path d="M0 0h6L3 4z" /></Icon>
            </ZoomSelect>
            <BarButton $w={17} $h={17} aria-label="Find">
              <Icon w={8} box="0 0 8 8" stroke="#ddd"><circle cx="3.500" cy="3.500" r="2.500" /><path d="m5.500 5.500 2 2" /></Icon>
            </BarButton>
            <BarButton $w={17} $h={17} aria-label="Menu">
              <Icon w={6} box="0 0 6 6" stroke="#ddd"><path d="M.5 1h5M.5 3h5M.5 5h5" strokeWidth="0.800" /></Icon>
            </BarButton>
            <IconButton $w={20} $h={17} aria-label="Minimise">
              <Icon w={6} box="0 0 6 6" stroke="#ddd"><path d="M1 4h4" /></Icon>
            </IconButton>
            <IconButton $w={16} $h={17} aria-label="Restore">
              <Icon w={6} box="0 0 6 6" stroke="#ddd" sw={0.8}><rect x="0.500" y="1.500" width="3.500" height="3.500" /><path d="M2 .5h3.500V4" /></Icon>
            </IconButton>
            <CloseDot $w={10} aria-label="Close">
              <Icon w={6} box="0 0 6 6" stroke="#fff"><path d="m1.500 1.500 3 3M4.500 1.500l-3 3" /></Icon>
            </CloseDot>
          </SharedGroup>
        </ViewerBar>
        <ViewerBody>
          <Sidebar>
            <ThumbList>
              {thumbs.map((art, i) => (
                <ThumbItem key={i}>
                  <Thumb $on={i === 2}>
                    {art}
                    {i + 1}
                  </Thumb>
                </ThumbItem>
              ))}
            </ThumbList>
            <SideTabs>
              <span><Icon w={8} box="0 0 8 8" stroke="#444"><path d="M1 1h2v2H1zM5 1h2v2H5zM1 5h2v2H1zM5 5h2v2H5z" /></Icon></span>
              <span><Icon w={8} box="0 0 8 8" stroke="#444"><path d="M1 1h6v6H1zM3 5l3-3" /></Icon></span>
              <span><Icon w={8} box="0 0 8 8" stroke="#444"><path d="M1 1h6v6H1zM4 1v6" /></Icon></span>
            </SideTabs>
          </Sidebar>
          <Slides />
        </ViewerBody>
      </Viewer>
    </SharedBody>
  </Shared>
);

export default function App() {
  return (
    <Desktop>
      <GlobalStyle />
      <TopBar>
        <Workspaces>
          <Pill />
          <WorkDot />
        </Workspaces>
        <Clock>{"Feb 27    3:38 PM"}</Clock>
        <Tray>
          <Lang>en</Lang>
          <Icon w={16} stroke="#e95420">
            <rect x="3" y="0.500" width="4.600" height="9" rx="2.300" fill="#e95420" stroke="none" />
            <path d="M1 7v1a4.300 4.300 0 0 0 8.600 0V7M5.300 12.500v2.500M3 15.300h4.600" />
            <path d="M12.500 5.500a4 4 0 0 0 0 5M15.300 4.500a6 6 0 0 0 0 7" />
          </Icon>
          <WifiGlyph size={16} />
          <Icon w={16}>
            <rect x="2.500" width="11" height="16" rx="1.500" fill="#f2f2f2" />
            <path d="m5 5 6 6-3 2.500v-11L11 5l-6 6" stroke="#131313" />
          </Icon>
          <SpeakerGlyph size={16} />
          <Icon w={16} stroke="#f2f2f2" sw={1.4}>
            <path d="M5 3.200a6 6 0 1 0 6 0M8 1v6.500" />
          </Icon>
        </Tray>
      </TopBar>
      <Body>
        <Dock aria-label="Dash">
          <DockItem $running aria-label="Firefox"><ActiveTile><FirefoxIcon /></ActiveTile></DockItem>
          <DockItem $running aria-label="Files"><FilesIcon /></DockItem>
          <DockItem aria-label="Ubuntu Software"><SoftwareIcon /></DockItem>
          <DockItem aria-label="Help"><HelpIcon /></DockItem>
          <DockItem $running aria-label="Terminal"><TerminalIcon /></DockItem>
          <DockRule />
          <DockItem $running aria-label="Text Editor"><EditorIcon /></DockItem>
          <DockItem aria-label="Disk 1"><HddIcon id="hdd1" /></DockItem>
          <DockItem aria-label="Disk 2"><HddIcon id="hdd2" /></DockItem>
          <DockItem aria-label="SSD">
            <DiskBody id="ssd">
              <text x="21" y="39.500" fontSize="16" textAnchor="middle" fill="#7c7c7c" fontFamily="Noto Sans, sans-serif">SSD</text>
            </DiskBody>
          </DockItem>
          <DockItem aria-label="Trash"><TrashIcon /></DockItem>
          <DockItem $last aria-label="Show Apps"><UbuntuLogo /></DockItem>
        </Dock>

        <Browser>
          <TabStrip>
            <TabListButton aria-label="Recent browsing">
              <Icon w={16} stroke="#3a3a3a" sw={1.5}>
                <path d="M3 1h10M1.500 5V4.200A1.500 1.500 0 0 1 3 3.500h10a1.500 1.500 0 0 1 1.500.7V5" strokeWidth="1.2" />
                <rect x="1" y="5.500" width="14" height="9.800" rx="1.800" />
                <path d="M6.500 9h3" />
              </Icon>
            </TabListButton>
            <Tab>
              <TabLink href="#whatsapp">
                <Icon w={14} box="0 0 14 14">
                  <path d="M7 0a7 7 0 1 1-3.500 13L0 14l1-3.500A7 7 0 0 1 7 0z" fill="#12c24a" />
                  <text x="7" y="10.500" fontSize="10" fontWeight="700" textAnchor="middle" fill="#fff" fontFamily="Noto Sans, sans-serif">2</text>
                </Icon>
                <TabText>(2) WhatsApp</TabText>
              </TabLink>
              <IconButton $w={16} aria-label="Close WhatsApp tab">
                <Icon w={8} box="0 0 8 8" stroke="#3a3a3a"><path d="m.5.5 7 7M7.500.5l-7 7" /></Icon>
              </IconButton>
            </Tab>
            <Tab $active>
              <TabLink href="#teams">
                <TabIconStack>
                  <TeamsLogo size={16} />
                  <SoundBadge>
                    <Icon w={16}>
                      <circle cx="8" cy="8" r="8" fill="#000" />
                      <path d="M3.500 6.500H5L7.500 4v8L5 9.500H3.500z" fill="#fff" />
                      <path d="M9 6.500a2 2 0 0 1 0 3M10.500 4.800a4.500 4.500 0 0 1 0 6.400" stroke="#fff" />
                    </Icon>
                  </SoundBadge>
                </TabIconStack>
                <TabText $faded>
                  Teams and Channels | Mee
                  <TabState>PLAYING</TabState>
                </TabText>
              </TabLink>
              <IconButton $w={16} aria-label="Close Teams tab">
                <Icon w={8} box="0 0 8 8" stroke="#3a3a3a"><path d="m.5.5 7 7M7.500.5l-7 7" /></Icon>
              </IconButton>
            </Tab>
            <IconButton $w={40} $h={36} aria-label="New tab">
              <Icon w={12} box="0 0 12 12" stroke="#3a3a3a" sw={1.3}><path d="M6 .7v10.600M.7 6h10.600" /></Icon>
            </IconButton>
            <Grow />
            <IconButton $w={36} aria-label="List all tabs">
              <Icon w={12} box="0 0 12 12" stroke="#3a3a3a" sw={1.4}><path d="m1 3.500 5 5 5-5" /></Icon>
            </IconButton>
            <Space $w={36} />
            <WindowButton $w={22} aria-label="Minimise">
              <Icon w={8} box="0 0 8 8" stroke="#2e2e2e"><path d="M0 6.500h8" strokeLinecap="butt" /></Icon>
            </WindowButton>
            <WindowButton $w={22} aria-label="Restore">
              <Icon w={8} box="0 0 8 8" stroke="#2e2e2e" sw={1}><rect x="0.500" y="2.500" width="5" height="5" /><path d="M2.500.5h5v5" stroke="#777" /></Icon>
            </WindowButton>
            <WindowButton $w={22} aria-label="Close">
              <Icon w={8} box="0 0 8 8" stroke="#2e2e2e" sw={1.3}><path d="m.7.7 6.600 6.600M7.300.7.700 7.300" /></Icon>
            </WindowButton>
          </TabStrip>

          <NavBar>
            <IconButton $w={36} aria-label="Back">
              <Icon w={16} stroke="#3a3a3a" sw={1.5}><path d="M14.500 8H1.500M7 2.500 1.500 8 7 13.500" /></Icon>
            </IconButton>
            <IconButton $w={36} aria-label="Forward">
              <Icon w={16} stroke="#b9b9b9" sw={1.5}><path d="M1.500 8h13M9 2.500 14.500 8 9 13.500" /></Icon>
            </IconButton>
            <IconButton $w={36} aria-label="Reload">
              <Icon w={16} stroke="#3a3a3a" sw={1.5}>
                <path d="M12.500 3.200A6.500 6.500 0 1 0 14.500 8" />
                <path d="M14.500 1v4.700H9.800z" fill="#3a3a3a" strokeWidth="1" />
              </Icon>
            </IconButton>
            <UrlBox>
              <UrlIcons>
                <Icon w={16} stroke="#4a4a4a" sw={1.3}><path d="M8 .8c2 1.500 4.500 2 6.500 2 .3 6-1.500 10-6.500 12.500C3 12.800 1.200 8.800 1.500 2.800c2 0 4.500-.5 6.500-2z" /></Icon>
                <Icon w={16} stroke="#4a4a4a" sw={1.3}><rect x="2.500" y="7" width="11" height="8.300" rx="1.800" /><path d="M4.500 7V4a3.500 3.500 0 0 1 7 0v3" /></Icon>
                <Icon w={16} stroke="#4a4a4a" sw={1.3}><path d="M1.500 5.500h8M6.500 11h8" /><circle cx="12.500" cy="5.500" r="1.900" /><circle cx="3.200" cy="11" r="1.900" /></Icon>
              </UrlIcons>
              <UrlMic>
                <Icon w={8} h={15} box="0 0 8 15" stroke="#dd3322" sw={1.3}>
                  <rect x="2" y="0.800" width="4" height="8" rx="2" />
                  <path d="M.7 7v.5a3.300 3.300 0 0 0 6.600 0V7M4 11v3M1.500 14.200h5" />
                </Icon>
              </UrlMic>
              <UrlInput aria-label="Address" defaultValue="https://teams.microsoft.com/v2/?tenantId=ff80bb69-3cdc-4c2c-a474-313aa4dde859" />
              <ZoomChip>80%</ZoomChip>
              <IconButton $w={32} aria-label="Bookmark">
                <Icon w={17} box="0 0 17 17" stroke="#4a4a4a" sw={1.3}><path d="m8.500 1.200 2.200 4.700 5.100.6-3.800 3.500 1 5.100-4.500-2.500L4 15.100l1-5.100L1.200 6.500l5.100-.6z" /></Icon>
              </IconButton>
            </UrlBox>
            <IconButton $w={36} aria-label="Pocket">
              <Icon w={16} stroke="#3a3a3a" sw={1.4}><path d="M2.500 2.500h11a1.500 1.500 0 0 1 1.500 1.500v3.500a7 7 0 0 1-14 0V4a1.500 1.500 0 0 1 1.500-1.500z" /><path d="m4.800 6.500 3.200 3 3.200-3" /></Icon>
            </IconButton>
            <IconButton $w={36} aria-label="Account">
              <Icon w={22} box="0 0 22 22">
                <circle cx="11" cy="11" r="7.300" stroke="#3a3a3a" strokeWidth="1.400" />
                <circle cx="11" cy="9.300" r="2.400" fill="#3a3a3a" />
                <path d="M6.500 12.800h9v1a2.500 2.500 0 0 1-2.500 2H9a2.500 2.500 0 0 1-2.500-2z" fill="#3a3a3a" />
                <circle cx="19" cy="4" r="3" fill="#00b3f4" />
              </Icon>
            </IconButton>
            <IconButton $w={36} aria-label="Extensions">
              <Icon w={16} stroke="#3a3a3a" sw={1.4}>
                <path d="M2 15.200v-4h1.500a1.700 1.700 0 0 0 0-3.400H2V5h4V2.800a1.800 1.800 0 0 1 3.600 0V5h4.200v10.200z" />
              </Icon>
            </IconButton>
            <IconButton $w={36} aria-label="Menu">
              <Icon w={14} box="0 0 14 14" stroke="#3a3a3a" sw={1.3}><path d="M1.500 2.500h11M1.500 7h11M1.500 11.500h11" /></Icon>
            </IconButton>
          </NavBar>

          <TeamsHeader>
            <HeaderSide>
              <TeamsLogo size={16} />
            </HeaderSide>
            <SearchField>
              <Icon w={12} box="0 0 12 12" stroke="#616161"><circle cx="5" cy="5" r="3.800" /><path d="m7.800 7.800 3.300 3.300" /></Icon>
              <input type="search" placeholder="Search (Ctrl+Alt+E)" aria-label="Search" />
            </SearchField>
            <HeaderSide $end>
              <IconButton $w={24} aria-label="More options">
                <Icon w={12} h={4} box="0 0 12 4" fill="#616161"><circle cx="2" cy="2" r="1" /><circle cx="6" cy="2" r="1" /><circle cx="10" cy="2" r="1" /></Icon>
              </IconButton>
              <Tenant>
                itihub
                <Icon w={11} box="0 0 11 11"><path d="M5.500 1 10.300 10H.7z" fill="#ca5010" stroke="#ca5010" /><path d="M5.500 4v3M5.500 8.600v.1" stroke="#fff" /></Icon>
              </Tenant>
              <MeAvatar>M</MeAvatar>
            </HeaderSide>
          </TeamsHeader>

          <TeamsBody>
            <Rail aria-label="Apps">
              <RailItem>
                <Icon w={18} box="0 0 18 18" stroke="#616161" sw={1.2}><path d="M9 1.500a5 5 0 0 0-5 5v4L2.500 13.500h13L14 10.500v-4a5 5 0 0 0-5-5zM7 14a2 2 0 0 0 4 0" /></Icon>
                Activity
              </RailItem>
              <RailItem>
                <ChatGlyph />
                Chat
              </RailItem>
              <RailItem>
                <Icon w={18} box="0 0 18 18" stroke="#616161" sw={1.1}>
                  <circle cx="9" cy="4" r="2" /><circle cx="3.800" cy="4.700" r="1.400" /><circle cx="14.200" cy="4.700" r="1.400" />
                  <path d="M5.800 8h6.400v4.500a3.200 3.200 0 0 1-6.400 0zM3.800 8H1.500v3.500a2.500 2.500 0 0 0 2.500 2.500M14.200 8h2.300v3.500a2.500 2.500 0 0 1-2.500 2.500" />
                </Icon>
                Teams
              </RailItem>
            </Rail>

            <Meeting>
              <CallBar>
                <Icon w={14} box="0 0 14 14" stroke="#424242"><path d="M7 .8c1.800 1.300 3.600 1.700 5.500 1.800.3 5-1.500 8.600-5.500 10.600C3 11.200 1.200 7.600 1.500 2.600 3.400 2.500 5.200 2.100 7 .8z" /></Icon>
                <Space $w={10} />
                <Icon w={14} box="0 0 14 14"><circle cx="7" cy="7" r="6.200" stroke="#333" strokeWidth="1.200" /><circle cx="7" cy="7" r="4.200" fill="#d13438" /></Icon>
                <Timer>02:46:43</Timer>
                <Grow />
                <CallButton><IconLine><ChatGlyph /></IconLine>Chat</CallButton>
                <CallButton>
                  <IconLine>
                    <Icon w={16} h={18} box="0 0 16 18" stroke="#333" sw={1.1}><circle cx="8" cy="5" r="3.500" /><path d="M2.500 10.500h11a1.200 1.200 0 0 1 1.200 1.200c0 2.800-2.500 4.800-6.700 4.800s-6.700-2-6.700-4.800a1.200 1.200 0 0 1 1.200-1.200z" /></Icon>
                    14
                  </IconLine>
                  People
                </CallButton>
                <CallButton>
                  <IconLine>
                    <Icon w={18} box="0 0 18 18" stroke="#333" sw={1.1}>
                      <path d="M3.500 10V4a1 1 0 0 1 2 0v4V2.500a1 1 0 0 1 2.200 0V7.500 1.800a1 1 0 0 1 2.200 0V8 3a1 1 0 0 1 2 0v7.500l2-1.700c1-.7 2.300.2 1.700 1-1.300 2-2.600 6.700-6.300 6.700-4 0-5.800-2-5.800-6.500z" />
                    </Icon>
                  </IconLine>
                  Raise
                </CallButton>
                <CallButton>
                  <IconLine>
                    <Icon w={18} box="0 0 18 18" stroke="#333" sw={1.1}><circle cx="9" cy="9" r="7.700" /><path d="M5.800 11.200a4.200 4.200 0 0 0 6.400 0" /><circle cx="6.500" cy="7" r="0.700" fill="#333" stroke="none" /><circle cx="11.500" cy="7" r="0.700" fill="#333" stroke="none" /></Icon>
                  </IconLine>
                  React
                </CallButton>
                <CallButton>
                  <IconLine>
                    <Icon w={16} stroke="#333" sw={1.1}><rect x="1" y="1" width="14" height="14" rx="2.200" /><path d="M8 1v14M1 8h14" /></Icon>
                  </IconLine>
                  View
                </CallButton>
                <CallButton>
                  <IconLine>
                    <Icon w={14} h={4} box="0 0 14 4" fill="#333"><circle cx="2" cy="2" r="1.200" /><circle cx="7" cy="2" r="1.200" /><circle cx="12" cy="2" r="1.200" /></Icon>
                  </IconLine>
                  More
                </CallButton>
                <CallRule />
                <CallButton $w={42}>
                  <IconLine>
                    <Icon w={18} box="0 0 18 18">
                      <rect x="1.500" y="3" width="10.500" height="12" rx="2" fill="#242424" />
                      <path d="m12.800 7.500 3.700-3v9l-3.700-3z" fill="#242424" />
                      <path d="m2 .8 15 15.700" stroke="#fff" strokeWidth="2.600" />
                      <path d="m1 .8 15.800 16" stroke="#242424" strokeWidth="1.100" />
                    </Icon>
                  </IconLine>
                  Camera
                </CallButton>
                <IconButton $w={16} $h={30} aria-label="Camera options"><Chevron /></IconButton>
                <Space $w={4} />
                <CallButton $w={40}>
                  <IconLine>
                    <Icon w={18} box="0 0 18 18">
                      <rect x="6" y="1" width="6" height="10" rx="3" fill="#242424" />
                      <path d="M4 8.500a5 5 0 0 0 10 0M9 13.500v3.500" stroke="#242424" strokeWidth="1.200" />
                      <path d="m2 .8 15 15.700" stroke="#fff" strokeWidth="2.200" />
                      <path d="m1 .8 15.800 16" stroke="#242424" strokeWidth="1.100" />
                    </Icon>
                  </IconLine>
                  Mic
                </CallButton>
                <IconButton $w={16} $h={30} aria-label="Mic options"><Chevron /></IconButton>
                <Space $w={3} />
                <CallButton $w={44}>
                  <IconLine>
                    <Icon w={16} h={13} box="0 0 16 13"><rect width="16" height="12.500" rx="2" fill="#242424" /><path d="M8 9.500V3.500M5.300 6 8 3.300 10.700 6" stroke="#fff" /></Icon>
                  </IconLine>
                  Share
                </CallButton>
                <LeaveButton>
                  <Icon w={16} h={8} box="0 0 16 8" fill="#fff"><path d="M.5 5.500C1 0 15 0 15.500 5.500c.1 1.500-.6 1.900-1.800 1.600l-1.900-.5c-1.400-.4-.8-2-1.500-2.400a8 8 0 0 0-4.600 0c-.7.4-.1 2-1.500 2.400l-1.900.5C1.100 7.400.4 7 .5 5.500z" /></Icon>
                  Leave
                </LeaveButton>
              </CallBar>

              <Stage>
                <SharedScreen />
                <Gallery aria-label="Participants">
                  <TileGrid>
                    {people.map((p, i) => (
                      <Tile key={i} $bg={p.tile} $speaking={p.speaking}>
                        <Avatar $bg={p.bg} $fg={p.fg}>{p.id}</Avatar>
                        {!p.speaking && <Muted inset={2} />}
                      </Tile>
                    ))}
                  </TileGrid>
                  <Pager>
                    <IconButton $w={14} $h={20} aria-label="Previous page">
                      <Icon w={12} box="0 0 12 12" stroke="#c4c4c4"><path d="M8 1.500 3.500 6 8 10.500" /></Icon>
                    </IconButton>
                    1/2
                    <IconButton $w={14} $h={20} aria-label="Next page">
                      <Icon w={12} box="0 0 12 12" stroke="#333" sw={1.2}><path d="M4 1.500 8.500 6 4 10.500" /></Icon>
                    </IconButton>
                  </Pager>
                  <SelfTile>
                    <Avatar $bg="#ccd9ea" $fg="#0f2f57" $big>M</Avatar>
                    <Muted inset={5} />
                  </SelfTile>
                </Gallery>
                <NameTag>Jospheen Boles Youseef</NameTag>
              </Stage>
            </Meeting>
          </TeamsBody>
        </Browser>
      </Body>
    </Desktop>
  );
}
